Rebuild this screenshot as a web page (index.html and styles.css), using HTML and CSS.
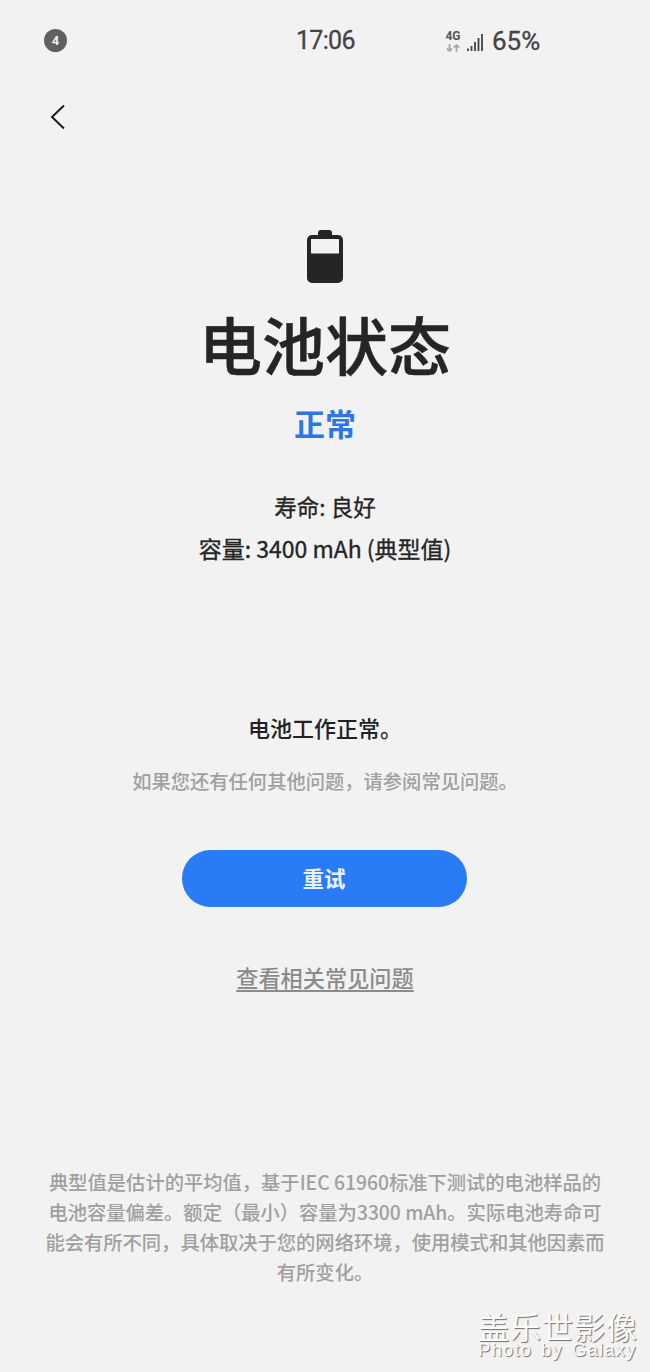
FILE: index.html
```html
<!DOCTYPE html>
<html lang="zh-CN">
<head>
<meta charset="utf-8">
<title>电池状态</title>
<link rel="stylesheet" href="styles.css">
</head>
<body>
<div class="page">
  <header class="status">
    <span class="badge">4</span>
    <span class="time">17:06</span>
    <span class="right">
      <span class="net"><span class="g4">4G</span>
        <svg class="arrows" width="16" height="9" viewBox="0 0 16 9"><path d="M4 0v8M1 5l3 3 3-3" fill="none" stroke="#a8a8a8" stroke-width="2"/><path d="M12 9V1M9 4l3-3 3 3" fill="none" stroke="#a8a8a8" stroke-width="2"/></svg>
      </span>
      <svg class="signal" width="17" height="18" viewBox="0 0 17 18"><path d="M1 15.500v2.500M4.500 13v5M8 9v9M11.500 5v13M15 1v17" fill="none" stroke="#444" stroke-width="1.800"/></svg>
      <span class="pct">65%</span>
    </span>
  </header>
  <nav class="nav">
    <svg class="back" width="16" height="26" viewBox="0 0 16 26"><path d="M14 1.500L2 13l12 11.500" fill="none" stroke="#1c1c1c" stroke-width="2"/></svg>
  </nav>
  <main class="main">
    <svg class="battery" width="36" height="54" viewBox="0 0 36 54">
      <path d="M11 4a3 3 0 0 1 3-3h8a3 3 0 0 1 3 3v2h6a5 5 0 0 1 5 5v38a5 5 0 0 1-5 5H5a5 5 0 0 1-5-5V11a5 5 0 0 1 5-5h6z" fill="#252525"/>
      <rect x="4" y="10" width="28" height="14.500" fill="#f2f2f2"/>
    </svg>
    <h1 class="title">电池状态</h1>
    <div class="state">正常</div>
    <p class="spec spec-life">寿命: 良好</p>
    <p class="spec">容量: 3400 mAh (典型值)</p>
    <p class="ok">电池工作正常。</p>
    <p class="hint">如果您还有任何其他问题，请参阅常见问题。</p>
    <button class="retry">重试</button>
    <a class="faq" href="#">查看相关常见问题</a>
  </main>
  <p class="note">典型值是估计的平均值，基于IEC 61960标准下测试的电池样品的<br>电池容量偏差。额定（最小）容量为3300 mAh。实际电池寿命可<br>能会有所不同，具体取决于您的网络环境，使用模式和其他因素而<br>有所变化。</p>
  <div class="mark">
    <div class="mark-cn">盖乐世影像</div>
    <div class="mark-en">Photo by Galaxy</div>
  </div>
</div>
</body>
</html>
```
FILE: styles.css
```css
* { box-sizing: border-box; }
html, body { margin: 0; padding: 0; }
body {
  width: 650px;
  height: 1372px;
  overflow: hidden;
  background: #f2f2f2;
  font-family: "Noto Sans CJK SC", "Noto Sans", sans-serif;
}
.page { position: relative; height: 1372px; }
.status {
  position: relative;
  height: 81px;
  padding: 29px 0 0 44px;
  color: #444;
}
.badge {
  display: flex;
  align-items: center;
  justify-content: center;
  width: 23px;
  height: 23px;
  border-radius: 50%;
  background: #606060;
  color: #f2f2f2;
  font: 700 13px Roboto, sans-serif;
}
.time {
  position: absolute;
  left: 296px;
  top: 26px;
  font: 400 25px/30px Roboto, sans-serif;
  letter-spacing: -0.7px;
  -webkit-text-stroke: 0.3px #444;
}
.right {
  position: absolute;
  left: 445px;
  top: 26px;
  display: flex;
  align-items: center;
  height: 30px;
}
.net { display: flex; flex-direction: column; align-items: center; width: 16px; margin-right: 6px; }
.g4 { font: 700 12px/11px Roboto, sans-serif; color: #555; }
.arrows { display: block; width: 14px; height: 8px; margin-top: 2px; }
.signal { margin-right: 8px; margin-top: 2px; }
.pct { font: 400 26px/30px Roboto, sans-serif; -webkit-text-stroke: 0.3px #444; }
.nav { height: 148px; padding: 23px 0 0 50px; }
.back { display: block; }
.main { display: flex; flex-direction: column; align-items: center; }
.battery { display: block; }
.title {
  margin: 20px 0 0;
  font-size: 63px;
  line-height: 80px;
  font-weight: 500;
  color: #252525;
  -webkit-text-stroke: 0.5px #252525;
}
.state {
  margin-top: 18px;
  font-size: 31px;
  line-height: 44px;
  font-weight: 700;
  color: #2a78e4;
}
.spec {
  margin: 0;
  font-size: 23px;
  line-height: 41.5px;
  font-weight: 400;
  color: #252525;
  -webkit-text-stroke: 0.35px #252525;
}
.spec-life { margin-top: 41px; font-size: 22.5px; }
.ok {
  margin: 142px 0 0;
  font-size: 22px;
  line-height: 32px;
  font-weight: 500;
  color: #222;
}
.hint {
  margin: 22px 0 0;
  font-size: 19.3px;
  line-height: 32px;
  font-weight: 500;
  color: #a0a0a0;
}
.retry {
  display: block;
  margin: 53px 2px 0 0;
  width: 285px;
  height: 57px;
  padding-bottom: 3px;
  border: 0;
  border-radius: 29px;
  background: #2a7bf6;
  color: #eaf2ff;
  font: 700 21.500px "Noto Sans CJK SC", sans-serif;
}
.faq {
  margin-top: 54px;
  font-size: 22.2px;
  line-height: 32px;
  font-weight: 500;
  color: #8b8b8b;
  text-decoration: underline;
  text-underline-offset: 3px;
}
.note {
  position: absolute;
  left: 0;
  right: 0;
  top: 1167px;
  margin: 0;
  text-align: center;
  font-size: 19.3px;
  line-height: 30px;
  font-weight: 500;
  color: #a0a0a0;
}
.mark {
  position: absolute;
  left: 478px;
  top: 1309px;
  width: 165px;
  color: #fdfdfd;
  text-shadow: 1px 1px 1px #707070;
}
.mark-cn { font-size: 31px; line-height: 33px; white-space: nowrap; letter-spacing: 1px; font-weight: 400; }
.mark-en { font: 400 18.500px/15px "Liberation Sans", sans-serif; letter-spacing: 1.1px; white-space: nowrap; word-spacing: 3px; }
```
